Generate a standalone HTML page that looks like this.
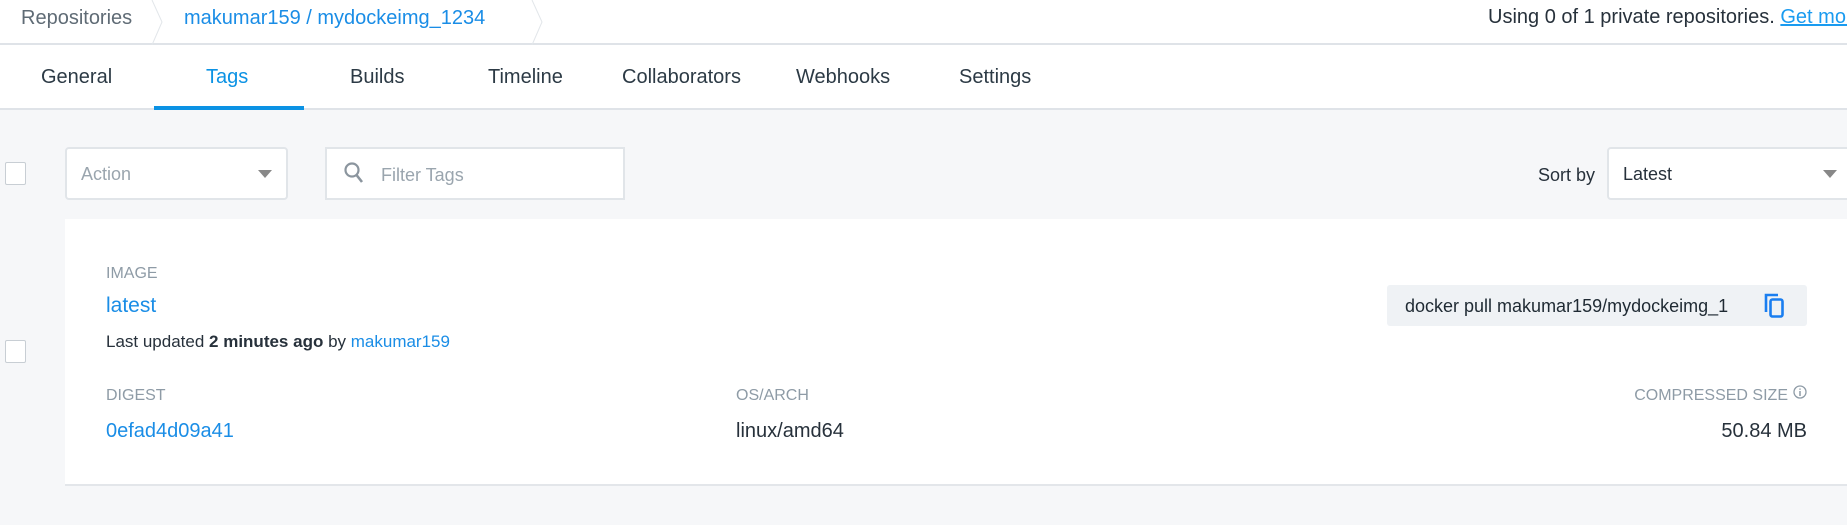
<!DOCTYPE html>
<html><head><meta charset="utf-8"><style>
*{margin:0;padding:0;box-sizing:border-box}
body{width:1847px;height:525px;overflow:hidden;background:#f6f7f9;font-family:"Liberation Sans",sans-serif;color:#27313b;position:relative}
.a{position:absolute;white-space:nowrap}
.top{position:absolute;left:0;top:0;width:1847px;height:45px;background:#fff;border-bottom:2px solid #dfe3e8}
.tabs{position:absolute;left:0;top:45px;width:1847px;height:65px;background:#fff;border-bottom:2px solid #dfe3e8}
.tab{position:absolute;top:21px;font-size:20px;color:#2c3a45}
.blue{color:#1a8de6}
.box{position:absolute;background:#fff;border:2px solid #e1e5e9;border-radius:4px}
.cb{position:absolute;width:21px;height:23px;border:1px solid #c8ced4;background:#fff;border-radius:2px}
.lbl{font-size:16px;color:#8e9ba6}
.tri{position:absolute;width:0;height:0;border-left:7px solid transparent;border-right:7px solid transparent;border-top:8px solid #888}
</style></head><body>
<div class="top">
  <div class="a" style="left:21px;top:7px;font-size:20px;color:#5f6b75">Repositories</div>
  <svg class="a" style="left:150px;top:0" width="14" height="45"><path d="M2 0 L12 22 L2 45" stroke="#e2e6ea" fill="none"/></svg>
  <div class="a blue" style="left:184px;top:7px;font-size:20px">makumar159 / mydockeimg_1234</div>
  <svg class="a" style="left:530px;top:0" width="14" height="45"><path d="M2 0 L12 22 L2 45" stroke="#e2e6ea" fill="none"/></svg>
  <div class="a" style="left:1488px;top:6px;font-size:20px;color:#27313b">Using 0 of 1 private repositories. <span style="color:#1a9bf0;text-decoration:underline">Get more</span></div>
</div>
<div class="tabs">
  <div class="tab" style="left:41px">General</div>
  <div class="tab blue" style="left:206px;color:#0b92e4">Tags</div>
  <div class="tab" style="left:350px">Builds</div>
  <div class="tab" style="left:488px">Timeline</div>
  <div class="tab" style="left:622px">Collaborators</div>
  <div class="tab" style="left:796px">Webhooks</div>
  <div class="tab" style="left:959px">Settings</div>
  <div class="a" style="left:154px;top:61px;width:150px;height:4px;background:#0b92e4"></div>
</div>
<div class="cb" style="left:5px;top:162px"></div>
<div class="box" style="left:65px;top:147px;width:223px;height:53px"></div>
<div class="a" style="left:81px;top:164px;font-size:18px;color:#9aa5ae">Action</div>
<div class="tri" style="left:258px;top:170px"></div>
<div class="box" style="left:325px;top:147px;width:300px;height:53px;border-radius:0"></div>
<svg class="a" style="left:343px;top:161px" width="22" height="24"><circle cx="9" cy="9" r="6.5" stroke="#8b959e" stroke-width="2.2" fill="none"/><path d="M13.5 14 L19 21" stroke="#8b959e" stroke-width="2.6"/></svg>
<div class="a" style="left:381px;top:165px;font-size:18px;color:#9aa5ae">Filter Tags</div>
<div class="a" style="left:1538px;top:165px;font-size:18px">Sort by</div>
<div class="box" style="left:1607px;top:147px;width:260px;height:53px"></div>
<div class="a" style="left:1623px;top:164px;font-size:18px">Latest</div>
<div class="tri" style="left:1823px;top:170px"></div>
<div class="a" style="left:65px;top:219px;width:1800px;height:267px;background:#fff;border-bottom:2px solid #e3e6ea"></div>
<div class="cb" style="left:5px;top:340px"></div>
<div class="a lbl" style="left:106px;top:265px">IMAGE</div>
<div class="a blue" style="left:106px;top:294px;font-size:21px">latest</div>
<div class="a" style="left:106px;top:332px;font-size:17px">Last updated <b>2 minutes ago</b> by <span class="blue">makumar159</span></div>
<div class="a" style="left:1387px;top:285px;width:420px;height:41px;background:#eff2f5;border-radius:3px"></div>
<div class="a" style="left:1405px;top:296px;font-size:18px;color:#1f2a33">docker pull makumar159/mydockeimg_1</div>
<svg class="a" style="left:1763px;top:292px" width="24" height="28"><path d="M3 20 V3 H15" stroke="#1a7ef0" stroke-width="2.6" fill="none"/><rect x="7.5" y="7.5" width="12" height="17" rx="2" stroke="#1a7ef0" stroke-width="2.6" fill="none"/></svg>
<div class="a lbl" style="left:106px;top:387px">DIGEST</div>
<div class="a lbl" style="left:736px;top:387px">OS/ARCH</div>
<div class="a lbl" style="right:59px;top:387px">COMPRESSED SIZE</div>
<svg class="a" style="left:1793px;top:385px" width="15" height="15"><circle cx="7" cy="7" r="6" stroke="#8e9ba6" stroke-width="1.3" fill="none"/><path d="M7 6 V11 M7 3.5 V4.8" stroke="#8e9ba6" stroke-width="1.5"/></svg>
<div class="a blue" style="left:106px;top:420px;font-size:20px">0efad4d09a41</div>
<div class="a" style="left:736px;top:420px;font-size:20px">linux/amd64</div>
<div class="a" style="right:40px;top:420px;font-size:20px">50.84 MB</div>
</body></html>
